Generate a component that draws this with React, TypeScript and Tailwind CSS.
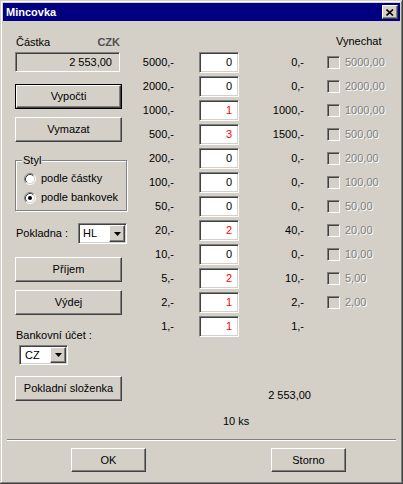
import React from 'react';

const sunken =
  'border border-t-[#808080] border-l-[#808080] border-b-white border-r-white shadow-[inset_1px_1px_#404040,inset_-1px_-1px_#d4d0c8]';
const raised =
  'border border-t-white border-l-white border-r-[#404040] border-b-[#404040] shadow-[inset_-1px_-1px_#808080,inset_1px_1px_#d4d0c8]';

const rows = [
  { d: '5000,-', n: '0', r: '0,-', c: '5000,00' },
  { d: '2000,-', n: '0', r: '0,-', c: '2000,00' },
  { d: '1000,-', n: '1', r: '1000,-', c: '1000,00' },
  { d: '500,-', n: '3', r: '1500,-', c: '500,00' },
  { d: '200,-', n: '0', r: '0,-', c: '200,00' },
  { d: '100,-', n: '0', r: '0,-', c: '100,00' },
  { d: '50,-', n: '0', r: '0,-', c: '50,00' },
  { d: '20,-', n: '2', r: '40,-', c: '20,00' },
  { d: '10,-', n: '0', r: '0,-', c: '10,00' },
  { d: '5,-', n: '2', r: '10,-', c: '5,00' },
  { d: '2,-', n: '1', r: '2,-', c: '2,00' },
  { d: '1,-', n: '1', r: '1,-', c: null },
];

const Button = ({ label, w, isDefault }: { label: string; w: string; isDefault?: boolean }) => {
  const face = <div className={`flex h-full w-full items-center justify-center ${raised}`}>{label}</div>;
  if (isDefault) return <div className={`h-[25px] ${w} border border-black`}>{face}</div>;
  return <div className={`h-[25px] ${w}`}>{face}</div>;
};

const Arrow = () => (
  <svg width="7" height="4" viewBox="0 0 7 4">
    <polygon points="0,0 7,0 3.5,4" fill="#000" />
  </svg>
);

const Combo = ({ value, h, pl }: { value: string; h: string; pl: string }) => (
  <div className={`flex w-[49px] ${h} items-stretch bg-white ${sunken} p-[1px]`}>
    <div className={`flex flex-1 items-center ${pl}`}>{value}</div>
    <div className={`flex w-[16px] items-center justify-center bg-[#d4d0c8] ${raised}`}>
      <Arrow />
    </div>
  </div>
);

const Radio = ({ checked }: { checked?: boolean }) => (
  <svg width="12" height="12" viewBox="0 0 12 12">
    <circle cx="6" cy="6" r="5" fill="#fff" />
    <path d="M2.11 9.89 A5.5 5.5 0 0 1 9.89 2.11" stroke="#808080" fill="none" />
    <path d="M2.82 9.18 A4.5 4.5 0 0 1 9.18 2.82" stroke="#404040" fill="none" />
    <path d="M2.11 9.89 A5.5 5.5 0 0 0 9.89 2.11" stroke="#fff" fill="none" />
    <path d="M2.82 9.18 A4.5 4.5 0 0 0 9.18 2.82" stroke="#d4d0c8" fill="none" />
    {checked && <circle cx="6" cy="6" r="2" fill="#000" />}
  </svg>
);

export default function App() {
  return (
    <div className="h-[484px] w-[403px] bg-[#d4d0c8] p-[3px] font-['Liberation_Sans',Arial,sans-serif] text-[11px] leading-[13px] text-black shadow-[inset_-1px_-1px_#404040,inset_1px_1px_#d4d0c8,inset_-2px_-2px_#808080,inset_2px_2px_#ffffff]">
      {/* title bar */}
      <div className="flex h-[18px] items-center bg-[#000080] pl-[3px] pr-[2px]">
        <span className="font-bold text-white">Mincovka</span>
        <div className={`ml-auto flex h-[14px] w-[16px] items-center justify-center bg-[#d4d0c8] ${raised}`}>
          <svg width="8" height="7" viewBox="0 0 8 7">
            <path d="M0.5 0.5 L7 6.5 M7 0.5 L0.5 6.5" stroke="#000" strokeWidth="1.6" />
          </svg>
        </div>
      </div>

      {/* body */}
      <div className="flex pl-[12px] pt-[14px]">
        {/* left column */}
        <div className="flex w-[112px] flex-col">
          <div className="mt-[1px] flex h-[13px] w-[105px] items-center justify-between pl-[1px]">
            <span>Částka</span>
            <span className="font-bold text-[#505050]">CZK</span>
          </div>
          <div className={`mt-[3px] flex h-[20px] w-[105px] items-center justify-end pr-[7px] ${sunken}`}>2 553,00</div>
          <div className="mt-[12px]">
            <Button label="Vypočti" w="w-[107px]" isDefault />
          </div>
          <div className="mt-[8px]">
            <Button label="Vymazat" w="w-[107px]" />
          </div>
          <div className="relative mt-[18px] h-[51px] w-[112px] border border-[#808080] pl-[8px] pt-[8px] shadow-[inset_1px_1px_#fff,1px_1px_#fff]">
            <span className="absolute left-[6px] top-[-7px] bg-[#d4d0c8] px-[1px]">Styl</span>
            <div className="flex h-[19px] items-center gap-[5px]">
              <Radio />
              <span>podle částky</span>
            </div>
            <div className="flex h-[19px] items-center gap-[5px]">
              <Radio checked />
              <span>podle bankovek</span>
            </div>
          </div>
          <div className="mt-[12px] flex h-[21px] items-center">
            <span className="pl-[1px]">Pokladna :</span>
            <div className="ml-auto">
              <Combo value="HL" h="h-[21px]" pl="pl-[3px]" />
            </div>
          </div>
          <div className="mt-[13px]">
            <Button label="Příjem" w="w-[107px]" />
          </div>
          <div className="mt-[8px]">
            <Button label="Výdej" w="w-[107px]" />
          </div>
          <div className="mt-[14px] h-[13px] pl-[1px]">Bankovní účet :</div>
          <div className="ml-[4px] mt-[3px]">
            <Combo value="CZ" h="h-[20px]" pl="pl-[4px]" />
          </div>
          <div className="mt-[11px]">
            <Button label="Pokladní složenka" w="w-[107px]" />
          </div>
        </div>

        {/* right part */}
        <div className="flex flex-col">
          <div className="ml-[209px] h-[13px]">Vynechat</div>
          <div className="mt-[4px] flex flex-col gap-[3px]">
            {rows.map((row) => (
              <div key={row.d} className="flex h-[21px] items-center">
                <div className="w-[47px] text-right">{row.d}</div>
                <div
                  className={`ml-[25px] flex h-[21px] w-[40px] items-center justify-end bg-white pr-[6px] ${sunken} ${
                    row.n === '0' ? 'text-black' : 'text-[#ff0000]'
                  }`}
                >
                  {row.n}
                </div>
                <div className="w-[65px] text-right">{row.r}</div>
                {row.c && (
                  <>
                    <div className={`ml-[23px] h-[13px] w-[13px] bg-[#d4d0c8] ${sunken}`} />
                    <div className="ml-[5px] text-[#808080] [text-shadow:1px_1px_0_#fff]">{row.c}</div>
                  </>
                )}
              </div>
            ))}
          </div>
          <div className="mt-[52px] h-[13px] w-[184px] text-right">2 553,00</div>
          <div className="ml-[96px] mt-[13px] h-[13px]">10 ks</div>
        </div>
      </div>

      {/* separator */}
      <div className="mx-[4px] mt-[11px] h-[2px] border-t border-b border-t-[#808080] border-b-white" />

      {/* buttons */}
      <div className="mt-[7px] flex gap-[125px] pl-[68px]">
        <div className={`flex h-[24px] w-[75px] items-center justify-center ${raised}`}>OK</div>
        <div className={`flex h-[24px] w-[75px] items-center justify-center ${raised}`}>Storno</div>
      </div>
    </div>
  );
}
